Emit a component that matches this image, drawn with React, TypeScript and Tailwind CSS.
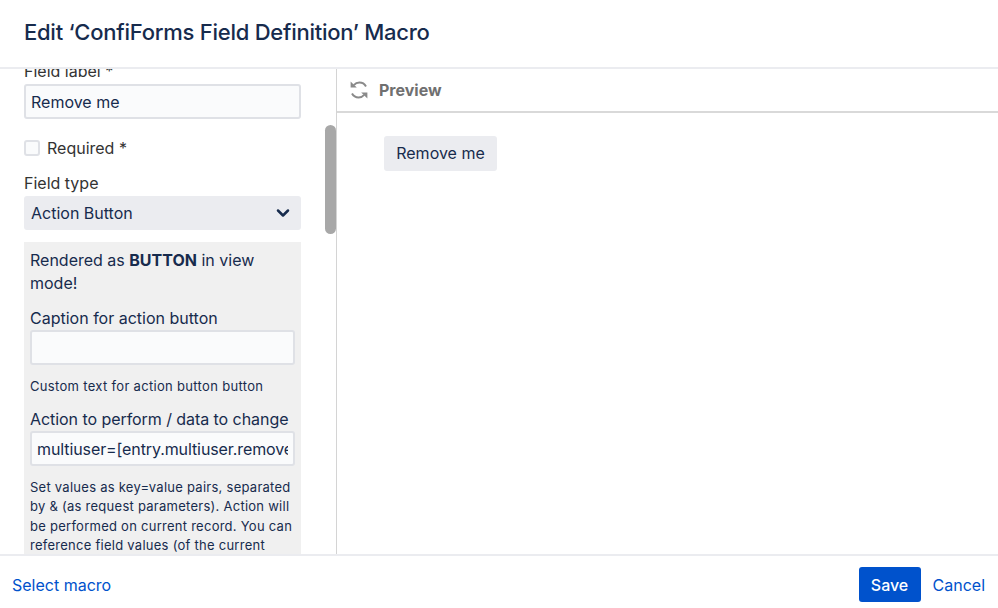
import { ChevronDown } from 'lucide-react'

const sans = 'font-["Inter","Noto_Sans",sans-serif]'

function RefreshIcon() {
    return (
        <svg width="20" height="20" viewBox="0 0 20 20" fill="none" className="text-[#8a8a8a]">
            <path d="M17 6.5C15.6 4 13.4 2.6 10.4 2.6c-2.4 0-4.2 1-5.6 2.6" stroke="currentColor" strokeWidth="2" fill="none" />
            <path d="M7.8 7.6H1.6V1.6z" fill="currentColor" />
            <path d="M3 13.5c1.4 2.5 3.6 3.9 6.6 3.9 2.4 0 4.2-1 5.6-2.6" stroke="currentColor" strokeWidth="2" fill="none" />
            <path d="M12.2 12.4h6.2v6z" fill="currentColor" />
        </svg>
    )
}

export default function App() {
    return (
        <div className={`${sans} flex h-[608px] w-[998px] flex-col overflow-hidden bg-white text-[#172b4d]`}>
            <header className="flex h-[69px] shrink-0 items-center border-b-2 border-[#ebecf0] pb-[3px] pl-6">
                <h1 className="text-[22px] font-medium tracking-[-0.25px]">Edit ‘ConfiForms Field Definition’ Macro</h1>
            </header>

            <div className="flex min-h-0 flex-1">
                <div className="relative w-[337px] shrink-0 overflow-hidden border-r border-[#d4d4d4]">
                    <div className="-mt-[10px] pl-6 pr-[36px]">
                        <label className="block h-[25px] text-base leading-[24px] text-[#333333]">Field label *</label>
                        <input
                            readOnly
                            value="Remove me"
                            className="h-[35px] w-[277px] rounded-[3px] border-2 border-[#dfe1e6] bg-[#fafbfc] px-[5px] pt-[1px] text-base outline-none"
                        />
                        <div className="mt-[17px] flex h-[24px] items-center gap-[7px]">
                            <span className="h-4 w-4 rounded-[3px] border-2 border-[#dfe1e6] bg-[#fafbfc]" />
                            <span className="text-base text-[#333333]">Required *</span>
                        </div>
                        <label className="mt-[11px] block h-[25px] text-base leading-[24px] text-[#333333]">Field type</label>
                        <div className="flex h-[34px] w-[277px] items-center justify-between rounded-[3px] bg-[#ebecf0] pl-[7px] pr-[8px] text-base">
                            <span>Action Button</span>
                            <ChevronDown size={20} strokeWidth={3} />
                        </div>

                        <div className="mt-[12px] w-[277px] bg-[#f0f0f0] px-[6px] pt-[7px]">
                            <p className="text-base leading-[23px]">
                                Rendered as <b className="font-bold">BUTTON</b> in view mode!
                            </p>
                            <label className="mt-[12px] block h-[23px] text-base leading-[23px]">Caption for action button</label>
                            <div className="h-[35px] rounded-[3px] border-2 border-[#dfe1e6] bg-[#fafbfc]" />
                            <p className="mt-[11px] text-[13px] leading-[20px] tracking-[0.32px]">Custom text for action button button</p>
                            <label className="mt-[12px] block h-[23px] text-base leading-[23px] tracking-[-0.06px]">Action to perform / data to change</label>
                            <input
                                readOnly
                                value="multiuser=[entry.multiuser.remove(_user)]"
                                className="h-[35px] w-full rounded-[3px] border-2 border-[#dfe1e6] bg-[#fafbfc] px-[5px] text-base tracking-[-0.1px] outline-none"
                            />
                            <p className="mt-[12px] text-[13px] leading-[19.4px] tracking-[0.26px]">
                                Set values as key=value pairs, separated by &amp; (as request parameters). Action will be performed on current record. You can reference field values (of the current record)
                            </p>
                        </div>
                    </div>
                    <div className="absolute left-[325px] top-[56px] h-[109px] w-[11px] rounded-full bg-[#a8a8a8]" />
                </div>

                <div className="min-w-0 flex-1">
                    <div className="flex h-[44px] items-center gap-[10px] border-b-2 border-[#d9d9d9] pl-[12px]">
                        <RefreshIcon />
                        <span className="text-base font-bold text-[#707070]">Preview</span>
                    </div>
                    <div className="pl-[47px] pt-[23px]">
                        <button className="h-[35px] w-[113px] rounded-[3px] bg-[#ebecf0] pb-[1px] text-base">Remove me</button>
                    </div>
                </div>
            </div>

            <footer className="flex h-[54px] shrink-0 items-center justify-between border-t-2 border-[#ebecf0] pl-3 pr-[13px] pt-[5px]">
                <a className="text-base text-[#0052cc]">Select macro</a>
                <div className="flex items-center gap-3">
                    <button className="h-[35px] w-[62px] rounded-[3px] bg-[#0052cc] text-base font-medium text-white">Save</button>
                    <a className="text-base text-[#0052cc]">Cancel</a>
                </div>
            </footer>
        </div>
    )
}
